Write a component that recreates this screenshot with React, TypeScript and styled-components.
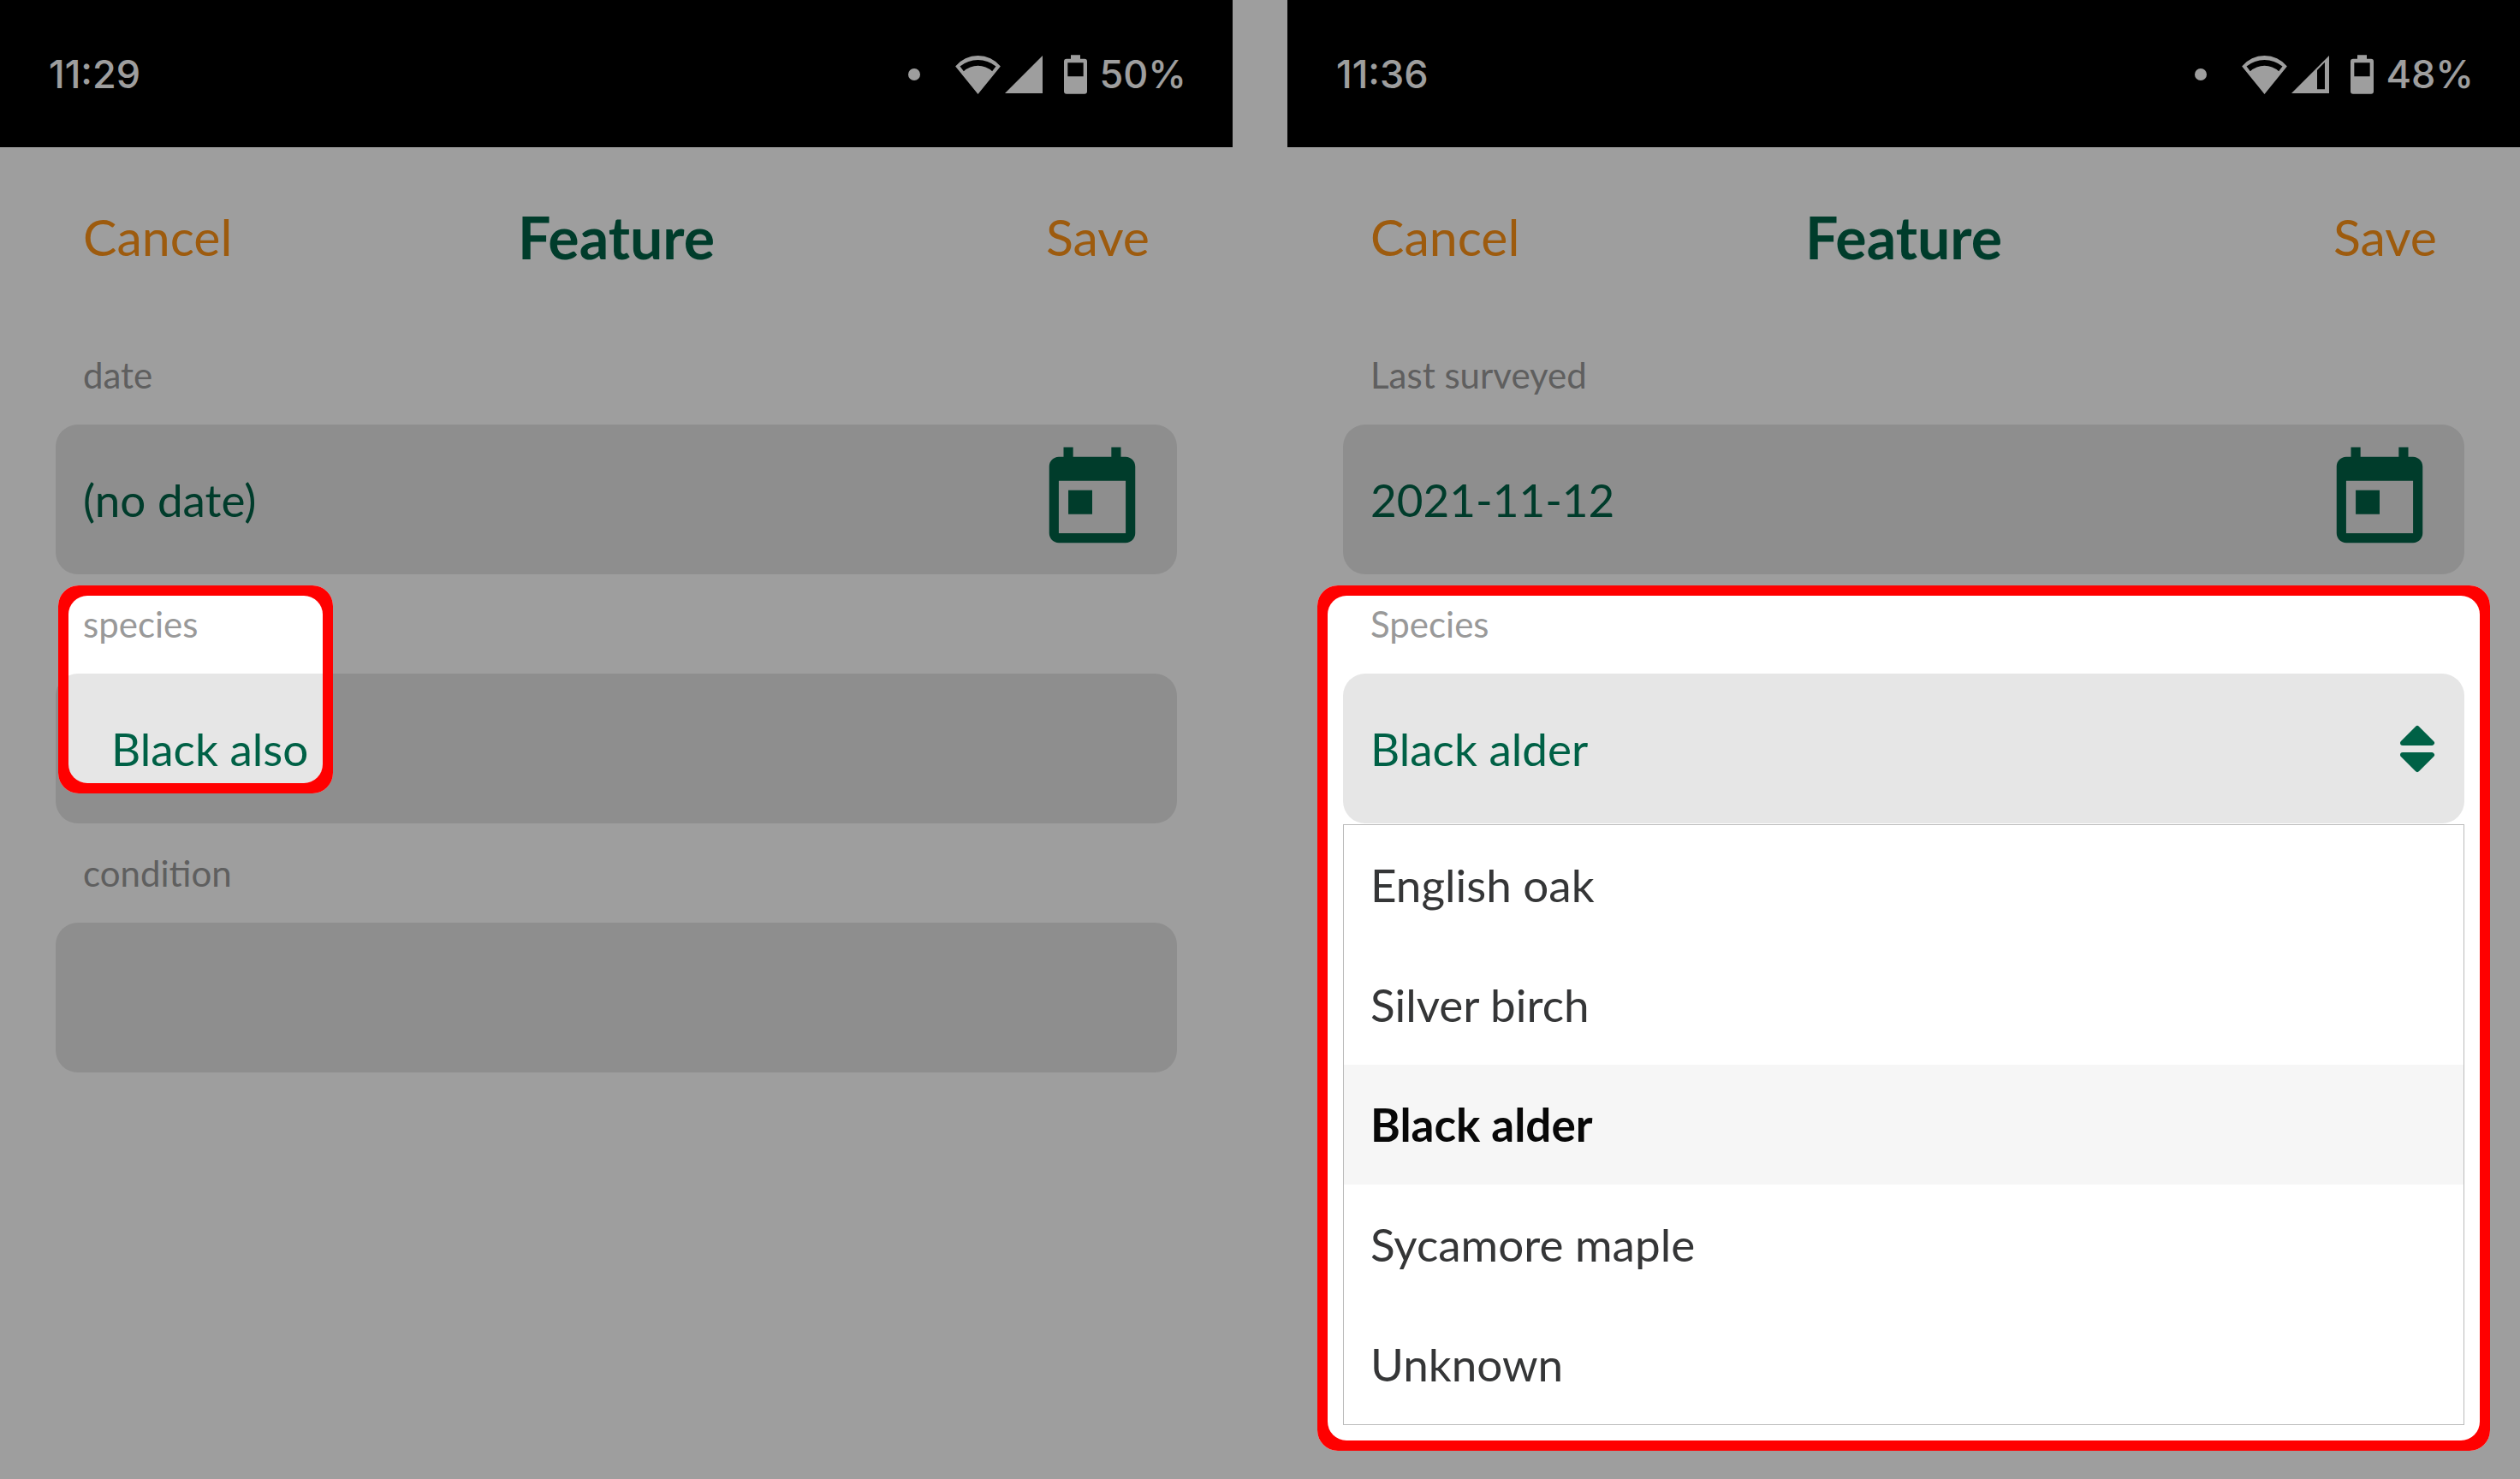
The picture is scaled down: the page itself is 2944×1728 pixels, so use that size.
import React, { useState } from 'react';
import styled, { createGlobalStyle } from 'styled-components';

const GlobalStyle = createGlobalStyle`
  *, *::before, *::after { box-sizing: border-box; }
  body {
    margin: 0;
    background: #9e9e9e;
    font-family: Lato, "Noto Sans", sans-serif;
  }
  button, input, select { font-family: inherit; }
`;

const green = '#006146';
const orange = '#fd9318';

const Screens = styled.main`
  display: grid;
  grid-template-columns: 1fr 1fr;
  column-gap: 64px;
  min-height: 100vh;
`;

const Phone = styled.section`
  display: flex;
  flex-direction: column;
  min-width: 0;
  overflow: hidden;
  background: #fff;
`;

const StatusBar = styled.div`
  display: flex;
  align-items: center;
  justify-content: space-between;
  height: 172px;
  padding: 2px 54px 0 57px;
  background: #000;
  color: #fff;
  font-family: Inter, Roboto, sans-serif;
  font-size: 45px;
  font-weight: 500;
  line-height: 56px;
`;

const StatusIcons = styled.div`
  display: flex;
  align-items: center;

  svg { display: block; fill: currentColor; }
`;

const Dot = styled.span`
  width: 14px;
  height: 14px;
  margin-right: 41px;
  border-radius: 50%;
  background: currentColor;
`;

const WifiSvg = styled.svg`
  width: 53px;
  height: 45px;
  margin-right: 5px;
`;

const SignalSvg = styled.svg`
  width: 44px;
  height: 44px;
  margin-right: 25px;
`;

const BatterySvg = styled.svg`
  width: 27px;
  height: 46px;
  margin-right: 14px;
`;

const Header = styled.header`
  display: grid;
  grid-template-columns: 1fr auto 1fr;
  align-items: center;
  height: 208px;
  padding: 2px 97px 0;
`;

const Title = styled.h1`
  margin: 0;
  color: ${green};
  font-size: 68px;
  font-weight: 700;
  line-height: 80px;
`;

const HeaderButton = styled.button<{ $end?: boolean }>`
  justify-self: ${(p) => (p.$end ? 'end' : 'start')};
  padding: 0;
  border: 0;
  background: none;
  color: ${orange};
  font-size: 59px;
  line-height: 72px;
  cursor: pointer;
`;

const Form = styled.form`
  display: flex;
  flex-direction: column;
  padding: 0 65px;
`;

const Field = styled.div`
  position: relative;
`;

const Label = styled.label`
  display: block;
  padding: 0 32px;
  color: #999;
  font-size: 42px;
  line-height: 116px;
`;

const Control = styled.div<{ $inset?: boolean }>`
  display: flex;
  align-items: center;
  height: 175px;
  padding: 0 ${(p) => (p.$inset ? 65 : 32)}px;
  border-radius: 26px;
  background: #e6e6e6;
`;

const TextInput = styled.input`
  flex: 1;
  min-width: 0;
  padding: 0;
  border: 0;
  outline: 0;
  background: none;
  color: ${green};
  font-size: 53px;
  line-height: 64px;
`;

const Select = styled.select`
  flex: 1;
  min-width: 0;
  padding: 0;
  border: 0;
  outline: 0;
  appearance: none;
  background: none;
  color: ${green};
  font-size: 53px;
  line-height: 64px;
`;

const IconButton = styled.button`
  padding: 0;
  border: 0;
  background: none;
  color: ${green};
  cursor: pointer;

  svg { display: block; width: 134px; height: 134px; fill: currentColor; }
`;

const SortSvg = styled.svg`
  width: 44px;
  height: 56px;
  fill: ${green};
  stroke: ${green};
  stroke-width: 6;
  stroke-linejoin: round;
`;

const OptionList = styled.ul`
  margin: 1px 0 0;
  padding: 0;
  border: 1px solid #bbb;
  list-style: none;
`;

const OptionRow = styled.li`
  display: flex;
`;

const Option = styled.button<{ $selected: boolean }>`
  flex: 1;
  height: 140px;
  padding: 0 31px;
  border: 0;
  background: ${(p) => (p.$selected ? '#f6f6f6' : '#fff')};
  color: ${(p) => (p.$selected ? '#080808' : '#353637')};
  font-size: 53px;
  font-weight: ${(p) => (p.$selected ? 700 : 400)};
  line-height: 64px;
  text-align: left;
  cursor: pointer;
`;

/* Dims everything around itself and frames what it covers in red. */
const Spotlight = styled.div`
  position: absolute;
  z-index: 1;
  overflow: hidden;
  border-radius: 24px;
  box-shadow: 0 0 0 4000px rgba(0, 0, 0, 0.38);
  pointer-events: none;

  &::before {
    content: '';
    position: absolute;
    inset: 12px;
    border-radius: 22px;
    box-shadow: 0 0 0 24px #f00;
  }
`;

const CornerSpotlight = styled(Spotlight)`
  top: 13px;
  left: 3px;
  width: 321px;
  height: 243px;
`;

const FullSpotlight = styled(Spotlight)`
  inset: 13px -30px -30px;
`;

const CalendarIcon = () => (
  <svg viewBox="0 0 24 24" aria-hidden="true">
    <path d="M19 3h-1V1h-2v2H8V1H6v2H5c-1.1 0-2 .9-2 2v14c0 1.1.9 2 2 2h14c1.1 0 2-.9 2-2V5c0-1.1-.9-2-2-2zm0 16H5V8h14v11zM7 10h5v5H7z" />
  </svg>
);

const SortIcon = () => (
  <SortSvg viewBox="0 0 44 56" aria-hidden="true">
    <path d="M21 4 38 21H4zM21 52 38 35H4z" />
  </SortSvg>
);

const WifiIcon = () => (
  <WifiSvg viewBox="0 0 157 134" aria-hidden="true">
    <path
      fillRule="evenodd"
      d="M0 37A102 102 0 0 1 157 37L78.500 134ZM16 37L29 54A74 74 0 0 1 128 54L141 37A100 100 0 0 0 16 37Z"
    />
  </WifiSvg>
);

const SignalIcon = ({ weak }: { weak?: boolean }) => (
  <SignalSvg viewBox="0 0 132 132" aria-hidden="true">
    <path fillRule="evenodd" d={`M0 132L132 0V132Z${weak ? 'M90 51V118H117V23Z' : ''}`} />
  </SignalSvg>
);

const BatteryIcon = () => (
  <BatterySvg viewBox="0 0 81 137" aria-hidden="true">
    <path
      fillRule="evenodd"
      d="M24 0H57V14H72Q81 14 81 23V128Q81 137 72 137H9Q0 137 0 128V23Q0 14 9 14H24ZM13 27V75H68V27Z"
    />
  </BatterySvg>
);

type ScreenProps = {
  time: string;
  battery: string;
  weakSignal?: boolean;
  children: React.ReactNode;
};

const Screen = ({ time, battery, weakSignal, children }: ScreenProps) => (
  <Phone>
    <StatusBar>
      <span>{time}</span>
      <StatusIcons>
        <Dot />
        <WifiIcon />
        <SignalIcon weak={weakSignal} />
        <BatteryIcon />
        <span>{battery}</span>
      </StatusIcons>
    </StatusBar>
    <Header>
      <HeaderButton type="button">Cancel</HeaderButton>
      <Title>Feature</Title>
      <HeaderButton type="button" $end>Save</HeaderButton>
    </Header>
    <Form>{children}</Form>
  </Phone>
);

const DateField = ({ id, label, value }: { id: string; label: string; value: string }) => (
  <Field>
    <Label htmlFor={id}>{label}</Label>
    <Control>
      <TextInput id={id} defaultValue={value} />
      <IconButton type="button" aria-label="Pick a date">
        <CalendarIcon />
      </IconButton>
    </Control>
  </Field>
);

const species = ['English oak', 'Silver birch', 'Black alder', 'Sycamore maple', 'Unknown'];

const SpeciesPicker = () => {
  const [value, setValue] = useState('Black alder');
  return (
    <Field>
      <Label htmlFor="species-select">Species</Label>
      <Control>
        <Select id="species-select" value={value} onChange={(e) => setValue(e.target.value)}>
          {species.map((name) => (
            <option key={name}>{name}</option>
          ))}
        </Select>
        <SortIcon />
      </Control>
      <OptionList>
        {species.map((name) => (
          <OptionRow key={name}>
            <Option type="button" $selected={name === value} onClick={() => setValue(name)}>
              {name}
            </Option>
          </OptionRow>
        ))}
      </OptionList>
      <FullSpotlight />
    </Field>
  );
};

export default function App() {
  return (
    <>
      <GlobalStyle />
      <Screens>
        <Screen time="11:29" battery="50%">
          <DateField id="date" label="date" value="(no date)" />
          <Field>
            <Label htmlFor="species">species</Label>
            <Control $inset>
              <TextInput id="species" defaultValue="Black also" />
            </Control>
            <CornerSpotlight />
          </Field>
          <Field>
            <Label htmlFor="condition">condition</Label>
            <Control>
              <TextInput id="condition" />
            </Control>
          </Field>
        </Screen>
        <Screen time="11:36" battery="48%" weakSignal>
          <DateField id="surveyed" label="Last surveyed" value="2021-11-12" />
          <SpeciesPicker />
        </Screen>
      </Screens>
    </>
  );
}
